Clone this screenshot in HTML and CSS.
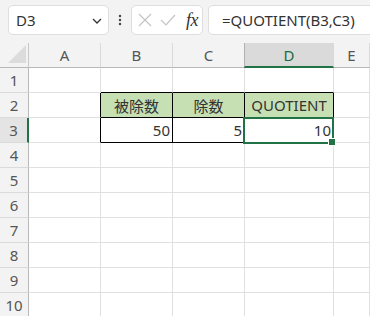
FILE: index.html
```html
<!DOCTYPE html>
<html lang="ja">
<head>
<meta charset="utf-8">
<link rel="stylesheet" href="styles.css">
</head>
<body>
<div class="app">
  <div class="toolbar">
    <div class="namebox">
      <span class="name">D3</span>
      <svg class="chev" width="10" height="6" viewBox="0 0 10 6"><path d="M1 1 L5 5 L9 1" fill="none" stroke="#333" stroke-width="1.3"/></svg>
    </div>
    <div class="dots">
      <svg width="4" height="12" viewBox="0 0 4 12"><circle cx="2" cy="2" r="1.2" fill="#444"/><circle cx="2" cy="6" r="1.2" fill="#444"/><circle cx="2" cy="10" r="1.2" fill="#444"/></svg>
    </div>
    <div class="fxbox">
      <svg class="ico" width="14" height="14" viewBox="0 0 14 14"><path d="M1 1 L13 13 M13 1 L1 13" stroke="#c4c4c4" stroke-width="1.2" fill="none"/></svg>
      <svg class="ico" width="16" height="12" viewBox="0 0 16 12"><path d="M1 6 L6 11 L15 1" stroke="#c4c4c4" stroke-width="1.2" fill="none"/></svg>
      <span class="fx">fx</span>
    </div>
    <div class="formula">=QUOTIENT(B3,C3)</div>
  </div>
  <div class="sheet">
    <div class="corner"><span class="tri"></span></div>
    <div class="ch">A</div>
    <div class="ch">B</div>
    <div class="ch">C</div>
    <div class="ch sel">D</div>
    <div class="ch">E</div>

    <div class="rh">1</div>
    <div class="c"></div><div class="c bb"></div><div class="c bb"></div><div class="c bb"></div><div class="c"></div>

    <div class="rh">2</div>
    <div class="c br"></div>
    <div class="c t hd">被除数</div>
    <div class="c t hd">除数</div>
    <div class="c t hd">QUOTIENT</div>
    <div class="c"></div>

    <div class="rh rsel">3</div>
    <div class="c br"></div>
    <div class="c t num">50</div>
    <div class="c t num">5</div>
    <div class="c t num">10</div>
    <div class="c"></div>

    <div class="rh">4</div><div class="c"></div><div class="c"></div><div class="c"></div><div class="c"></div><div class="c"></div>
    <div class="rh">5</div><div class="c"></div><div class="c"></div><div class="c"></div><div class="c"></div><div class="c"></div>
    <div class="rh">6</div><div class="c"></div><div class="c"></div><div class="c"></div><div class="c"></div><div class="c"></div>
    <div class="rh">7</div><div class="c"></div><div class="c"></div><div class="c"></div><div class="c"></div><div class="c"></div>
    <div class="rh">8</div><div class="c"></div><div class="c"></div><div class="c"></div><div class="c"></div><div class="c"></div>
    <div class="rh">9</div><div class="c"></div><div class="c"></div><div class="c"></div><div class="c"></div><div class="c"></div>
    <div class="rh">10</div><div class="c"></div><div class="c"></div><div class="c"></div><div class="c"></div><div class="c"></div>

    <div class="selbox"><span class="handle"></span></div>
  </div>
</div>
</body>
</html>
```

FILE: styles.css
```css
html, body {
  margin: 0;
  padding: 0;
  background: #fff;
}
.app {
  width: 370px;
  height: 316px;
  overflow: hidden;
  font-family: "Noto Sans", "Noto Sans CJK JP", sans-serif;
  color: #333;
}
.toolbar {
  height: 43px;
  box-sizing: border-box;
  background: #f3f3f3;
  padding: 5px 0 0 8px;
  display: flex;
  align-items: flex-start;
  overflow: hidden;
}
.namebox {
  width: 101px;
  height: 30px;
  box-sizing: border-box;
  background: #fff;
  border: 1px solid #dedede;
  border-radius: 5px;
  display: flex;
  align-items: center;
  justify-content: space-between;
  padding: 0 6px 0 7px;
  flex: none;
}
.name {
  font-size: 15px;
  color: #333;
}
.chev { margin-top: 2px; }
.dots {
  width: 22px;
  height: 30px;
  display: flex;
  align-items: center;
  justify-content: center;
  flex: none;
}
.fxbox {
  width: 72px;
  height: 30px;
  box-sizing: border-box;
  background: #fff;
  border: 1px solid #dedede;
  border-radius: 5px;
  display: flex;
  align-items: center;
  padding: 0 0 0 6px;
  gap: 8px;
  flex: none;
}
.fx {
  font-family: "Liberation Serif", serif;
  font-style: italic;
  font-size: 18px;
  color: #333;
  margin-left: 2px;
  letter-spacing: -0.5px;
}
.formula {
  margin-left: 5px;
  width: 200px;
  height: 30px;
  box-sizing: border-box;
  background: #fff;
  border: 1px solid #dedede;
  border-radius: 5px;
  display: flex;
  align-items: center;
  padding-left: 13px;
  font-size: 15px;
  color: #333;
  white-space: nowrap;
  flex: none;
}
.sheet {
  position: relative;
  display: grid;
  grid-template-columns: 29px 72px 72px 72px 89px 1fr;
  grid-auto-rows: 25px;
}
.sheet > div {
  box-sizing: border-box;
}
.corner {
  background: #f3f3f3;
  border-right: 1px solid #c8c8c8;
  border-bottom: 1px solid #b8b8b8;
  position: relative;
}
.tri {
  position: absolute;
  right: 2px;
  bottom: 4px;
  width: 0;
  height: 0;
  border-left: 18px solid transparent;
  border-bottom: 18px solid #dcdcdc;
}
.ch {
  background: #f3f3f3;
  border-right: 1px solid #dadada;
  border-bottom: 1px solid #b8b8b8;
  display: flex;
  align-items: center;
  justify-content: center;
  font-size: 15px;
  color: #555;
}
.ch.sel {
  background: #dadada;
  color: #1e6b41;
  border-left: 1px solid #b0b0b0;
  border-bottom: 2px solid #217346;
  margin-left: -1px;
}
.rh {
  background: #f3f3f3;
  border-right: 1px solid #b8b8b8;
  border-bottom: 1px solid #dadada;
  display: flex;
  align-items: center;
  justify-content: center;
  font-size: 15px;
  color: #555;
}
.rh.rsel {
  background: #e4e4e4;
  color: #555;
  border-right: 2px solid #217346;
}
.c {
  border-right: 1px solid #e0e0e0;
  border-bottom: 1px solid #e0e0e0;
  font-size: 15px;
  color: #333;
  display: flex;
  align-items: center;
}
.c.bb { border-bottom-color: #000; }
.c.br { border-right-color: #000; }
.c.t {
  border-right-color: #000;
  border-bottom-color: #000;
}
.c.hd {
  background: #c6e0b4;
  justify-content: center;
}
.c.num {
  justify-content: flex-end;
  padding-right: 2px;
}
.selbox {
  position: absolute;
  left: 243px;
  top: 74px;
  width: 91px;
  height: 27px;
  box-sizing: border-box;
  border: 2px solid #217346;
}
.handle {
  position: absolute;
  right: -4px;
  bottom: -4px;
  width: 6px;
  height: 6px;
  background: #217346;
  border: 1px solid #fff;
}
```
